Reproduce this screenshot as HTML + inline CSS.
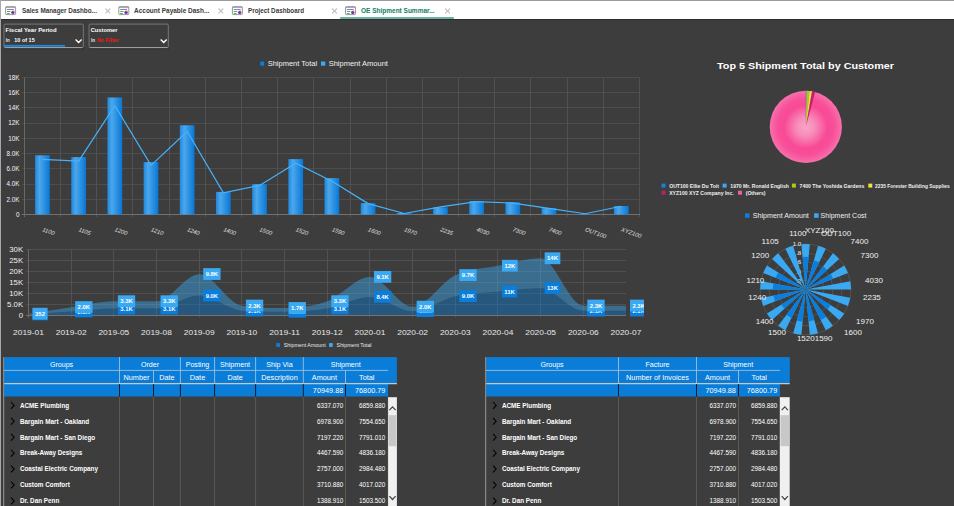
<!DOCTYPE html><html><head><meta charset="utf-8"><style>
*{margin:0;padding:0;box-sizing:border-box}
html,body{width:954px;height:506px;overflow:hidden;background:#3d3d3d;font-family:"Liberation Sans", sans-serif;}
.a{position:absolute}
svg{position:absolute;left:0;top:0;overflow:visible}

</style></head><body>
<div class="a" style="left:0;top:0;width:954px;height:1px;background:#9a9a9a"></div>
<div class="a" style="left:0;top:1px;width:954px;height:18px;background:#fff"></div>
<div class="a" style="left:0;top:19px;width:954px;height:1px;background:#2e2e2e"></div>
<div class="a" style="left:0;top:0;width:1px;height:506px;background:#a8a8a8"></div>
<svg width="954" height="506" viewBox="0 0 954 506" font-family='Liberation Sans, sans-serif'>
<g transform="translate(0.0,0)">
<rect x="5.6" y="6.8" width="10" height="7.8" rx="0.8" fill="#fdfdfd" stroke="#8a8a8a" stroke-width="0.9"/>
<rect x="5.6" y="6.6" width="10" height="1" fill="#8a8a8a"/>
<rect x="6.9" y="9.1" width="6.9" height="0.8" fill="#6a5ad6"/>
<rect x="6.9" y="11" width="3.5" height="0.9" fill="#3cb043"/>
<rect x="6.9" y="13" width="2.8" height="0.9" fill="#3cb043"/>
<circle cx="12.9" cy="12.4" r="1.7" fill="#6a2fc8"/>
<circle cx="13.6" cy="11.2" r="0.8" fill="#f07828"/>
</g>
<text x="22.0" y="12.8" font-size="6.4" fill="#3a3a3a" font-weight="bold" textLength="74.9" lengthAdjust="spacingAndGlyphs">Sales Manager Dashbo...</text>
<path d="M105.40,8.50 L110.20,13.30 M110.20,8.50 L105.40,13.30" stroke="#c2c2c2" stroke-width="1.1"/>
<g transform="translate(113.2,0)">
<rect x="5.6" y="6.8" width="10" height="7.8" rx="0.8" fill="#fdfdfd" stroke="#8a8a8a" stroke-width="0.9"/>
<rect x="5.6" y="6.6" width="10" height="1" fill="#8a8a8a"/>
<rect x="6.9" y="9.1" width="6.9" height="0.8" fill="#6a5ad6"/>
<rect x="6.9" y="11" width="3.5" height="0.9" fill="#3cb043"/>
<rect x="6.9" y="13" width="2.8" height="0.9" fill="#3cb043"/>
<circle cx="12.9" cy="12.4" r="1.7" fill="#6a2fc8"/>
<circle cx="13.6" cy="11.2" r="0.8" fill="#f07828"/>
</g>
<text x="134.0" y="12.8" font-size="6.4" fill="#3a3a3a" font-weight="bold" textLength="75.3" lengthAdjust="spacingAndGlyphs">Account Payable Dash...</text>
<path d="M218.50,8.50 L223.30,13.30 M223.30,8.50 L218.50,13.30" stroke="#c2c2c2" stroke-width="1.1"/>
<g transform="translate(226.8,0)">
<rect x="5.6" y="6.8" width="10" height="7.8" rx="0.8" fill="#fdfdfd" stroke="#8a8a8a" stroke-width="0.9"/>
<rect x="5.6" y="6.6" width="10" height="1" fill="#8a8a8a"/>
<rect x="6.9" y="9.1" width="6.9" height="0.8" fill="#6a5ad6"/>
<rect x="6.9" y="11" width="3.5" height="0.9" fill="#3cb043"/>
<rect x="6.9" y="13" width="2.8" height="0.9" fill="#3cb043"/>
<circle cx="12.9" cy="12.4" r="1.7" fill="#6a2fc8"/>
<circle cx="13.6" cy="11.2" r="0.8" fill="#f07828"/>
</g>
<text x="248.0" y="12.8" font-size="6.4" fill="#3a3a3a" font-weight="bold" textLength="56.0" lengthAdjust="spacingAndGlyphs">Project Dashboard</text>
<path d="M332.10,8.50 L336.90,13.30 M336.90,8.50 L332.10,13.30" stroke="#c2c2c2" stroke-width="1.1"/>
<g transform="translate(339.9,0)">
<rect x="5.6" y="6.8" width="10" height="7.8" rx="0.8" fill="#fdfdfd" stroke="#8a8a8a" stroke-width="0.9"/>
<rect x="5.6" y="6.6" width="10" height="1" fill="#8a8a8a"/>
<rect x="6.9" y="9.1" width="6.9" height="0.8" fill="#6a5ad6"/>
<rect x="6.9" y="11" width="3.5" height="0.9" fill="#3cb043"/>
<rect x="6.9" y="13" width="2.8" height="0.9" fill="#3cb043"/>
<circle cx="12.9" cy="12.4" r="1.7" fill="#6a2fc8"/>
<circle cx="13.6" cy="11.2" r="0.8" fill="#f07828"/>
</g>
<text x="361.0" y="12.8" font-size="6.4" fill="#0b7d62" font-weight="bold" textLength="73.6" lengthAdjust="spacingAndGlyphs">OE Shipment Summar...</text>
<path d="M445.20,8.50 L450.00,13.30 M450.00,8.50 L445.20,13.30" stroke="#c2c2c2" stroke-width="1.1"/>
<rect x="340.2" y="17.4" width="113.6" height="1.2" fill="#0b7d62"/>
<rect x="4.5" y="48" width="79.3" height="1.2" fill="#2e2e2e"/>
<rect x="4.0" y="24.1" width="79.3" height="23.5" rx="1" fill="none" stroke="#858585" stroke-width="0.8"/>
<line x1="5.0" y1="47.6" x2="82.3" y2="47.6" stroke="#b0b0b0" stroke-width="0.8"/>
<text x="5.6" y="31.9" font-size="5.9" font-weight="bold" fill="#fff" textLength="51.0" lengthAdjust="spacingAndGlyphs">Fiscal Year Period</text>
<text x="5.8" y="42.3" font-size="4.5" font-weight="bold" fill="#e8e8e8">In</text>
<text x="14.3" y="41.9" font-size="5.5" font-weight="bold" fill="#fff" textLength="20.4" lengthAdjust="spacingAndGlyphs">10 of 15</text>
<path d="M75.6 39.6 L78.6 42.6 L81.6 39.6" fill="none" stroke="#fff" stroke-width="1.4"/>
<rect x="89.6" y="48" width="79.2" height="1.2" fill="#2e2e2e"/>
<rect x="89.1" y="24.1" width="79.2" height="23.5" rx="1" fill="none" stroke="#858585" stroke-width="0.8"/>
<line x1="90.1" y1="47.6" x2="167.3" y2="47.6" stroke="#b0b0b0" stroke-width="0.8"/>
<text x="90.7" y="31.9" font-size="5.9" font-weight="bold" fill="#fff" textLength="26.7" lengthAdjust="spacingAndGlyphs">Customer</text>
<text x="90.9" y="42.3" font-size="4.5" font-weight="bold" fill="#e8e8e8">In</text>
<text x="96.9" y="41.9" font-size="5.5" font-weight="bold" fill="#f01818" textLength="21.8" lengthAdjust="spacingAndGlyphs">No Filter</text>
<path d="M160.7 39.6 L163.7 42.6 L166.7 39.6" fill="none" stroke="#fff" stroke-width="1.4"/>
<rect x="4.0" y="44.9" width="61" height="1.8" fill="#1a8ae6"/>
<defs><linearGradient id="bg1" x1="0" x2="1" y1="0" y2="0"><stop offset="0" stop-color="#1f88dc"/><stop offset="0.3" stop-color="#4ba7ec"/><stop offset="0.65" stop-color="#2a8fe0"/><stop offset="1" stop-color="#0877d6"/></linearGradient>
<radialGradient id="pie" cx="0.5" cy="0.5" r="0.5"><stop offset="0" stop-color="#f9a6c8"/><stop offset="0.25" stop-color="#f88cba"/><stop offset="0.6" stop-color="#f84a96"/><stop offset="0.78" stop-color="#f84f99"/><stop offset="1" stop-color="#f870ac"/></radialGradient></defs>
<line x1="21.9" y1="214.50" x2="639.5" y2="214.50" stroke="#4d4d4d" stroke-width="1"/>
<text x="19.4" y="216.80" font-size="6.3" fill="#f4f4f4" text-anchor="end">0</text>
<line x1="21.9" y1="199.50" x2="639.5" y2="199.50" stroke="#4d4d4d" stroke-width="1"/>
<text x="19.4" y="201.58" font-size="6.3" fill="#f4f4f4" text-anchor="end">2.0K</text>
<line x1="21.9" y1="184.50" x2="639.5" y2="184.50" stroke="#4d4d4d" stroke-width="1"/>
<text x="19.4" y="186.36" font-size="6.3" fill="#f4f4f4" text-anchor="end">4.0K</text>
<line x1="21.9" y1="168.50" x2="639.5" y2="168.50" stroke="#4d4d4d" stroke-width="1"/>
<text x="19.4" y="171.14" font-size="6.3" fill="#f4f4f4" text-anchor="end">6.0K</text>
<line x1="21.9" y1="153.50" x2="639.5" y2="153.50" stroke="#4d4d4d" stroke-width="1"/>
<text x="19.4" y="155.92" font-size="6.3" fill="#f4f4f4" text-anchor="end">8.0K</text>
<line x1="21.9" y1="138.50" x2="639.5" y2="138.50" stroke="#4d4d4d" stroke-width="1"/>
<text x="19.4" y="140.70" font-size="6.3" fill="#f4f4f4" text-anchor="end">10K</text>
<line x1="21.9" y1="123.50" x2="639.5" y2="123.50" stroke="#4d4d4d" stroke-width="1"/>
<text x="19.4" y="125.48" font-size="6.3" fill="#f4f4f4" text-anchor="end">12K</text>
<line x1="21.9" y1="107.50" x2="639.5" y2="107.50" stroke="#4d4d4d" stroke-width="1"/>
<text x="19.4" y="110.26" font-size="6.3" fill="#f4f4f4" text-anchor="end">14K</text>
<line x1="21.9" y1="92.50" x2="639.5" y2="92.50" stroke="#4d4d4d" stroke-width="1"/>
<text x="19.4" y="95.04" font-size="6.3" fill="#f4f4f4" text-anchor="end">16K</text>
<line x1="21.9" y1="77.50" x2="639.5" y2="77.50" stroke="#4d4d4d" stroke-width="1"/>
<text x="19.4" y="79.82" font-size="6.3" fill="#f4f4f4" text-anchor="end">18K</text>
<line x1="24.50" y1="77.5" x2="24.50" y2="217.0" stroke="#515151" stroke-width="1"/>
<line x1="60.50" y1="77.5" x2="60.50" y2="217.0" stroke="#515151" stroke-width="1"/>
<line x1="96.50" y1="77.5" x2="96.50" y2="217.0" stroke="#515151" stroke-width="1"/>
<line x1="132.50" y1="77.5" x2="132.50" y2="217.0" stroke="#515151" stroke-width="1"/>
<line x1="169.50" y1="77.5" x2="169.50" y2="217.0" stroke="#515151" stroke-width="1"/>
<line x1="205.50" y1="77.5" x2="205.50" y2="217.0" stroke="#515151" stroke-width="1"/>
<line x1="241.50" y1="77.5" x2="241.50" y2="217.0" stroke="#515151" stroke-width="1"/>
<line x1="277.50" y1="77.5" x2="277.50" y2="217.0" stroke="#515151" stroke-width="1"/>
<line x1="313.50" y1="77.5" x2="313.50" y2="217.0" stroke="#515151" stroke-width="1"/>
<line x1="350.50" y1="77.5" x2="350.50" y2="217.0" stroke="#515151" stroke-width="1"/>
<line x1="386.50" y1="77.5" x2="386.50" y2="217.0" stroke="#515151" stroke-width="1"/>
<line x1="422.50" y1="77.5" x2="422.50" y2="217.0" stroke="#515151" stroke-width="1"/>
<line x1="458.50" y1="77.5" x2="458.50" y2="217.0" stroke="#515151" stroke-width="1"/>
<line x1="494.50" y1="77.5" x2="494.50" y2="217.0" stroke="#515151" stroke-width="1"/>
<line x1="530.50" y1="77.5" x2="530.50" y2="217.0" stroke="#515151" stroke-width="1"/>
<line x1="567.50" y1="77.5" x2="567.50" y2="217.0" stroke="#515151" stroke-width="1"/>
<line x1="603.50" y1="77.5" x2="603.50" y2="217.0" stroke="#515151" stroke-width="1"/>
<line x1="639.50" y1="77.5" x2="639.50" y2="217.0" stroke="#515151" stroke-width="1"/>
<line x1="21.9" y1="214.50" x2="640.0" y2="214.50" stroke="#727272" stroke-width="1"/>
<line x1="24.50" y1="77.5" x2="24.50" y2="217.0" stroke="#686868" stroke-width="1"/>
<rect x="35.09" y="155.29" width="14.7" height="59.21" fill="url(#bg1)"/>
<rect x="71.27" y="157.12" width="14.7" height="57.38" fill="url(#bg1)"/>
<rect x="107.45" y="97.46" width="14.7" height="117.04" fill="url(#bg1)"/>
<rect x="143.63" y="162.07" width="14.7" height="52.43" fill="url(#bg1)"/>
<rect x="179.81" y="125.23" width="14.7" height="89.27" fill="url(#bg1)"/>
<rect x="215.99" y="191.90" width="14.7" height="22.60" fill="url(#bg1)"/>
<rect x="252.17" y="184.14" width="14.7" height="30.36" fill="url(#bg1)"/>
<rect x="288.35" y="159.10" width="14.7" height="55.40" fill="url(#bg1)"/>
<rect x="324.53" y="178.12" width="14.7" height="36.38" fill="url(#bg1)"/>
<rect x="360.71" y="203.16" width="14.7" height="11.34" fill="url(#bg1)"/>
<rect x="396.89" y="212.98" width="14.7" height="1.52" fill="url(#bg1)"/>
<rect x="433.07" y="207.35" width="14.7" height="7.15" fill="url(#bg1)"/>
<rect x="469.25" y="201.03" width="14.7" height="13.47" fill="url(#bg1)"/>
<rect x="505.43" y="202.17" width="14.7" height="12.33" fill="url(#bg1)"/>
<rect x="541.61" y="208.11" width="14.7" height="6.39" fill="url(#bg1)"/>
<rect x="577.79" y="214.12" width="14.7" height="0.38" fill="url(#bg1)"/>
<rect x="613.97" y="206.05" width="14.7" height="8.45" fill="url(#bg1)"/>
<polyline points="42.49,159.33 78.67,161.08 114.85,105.68 151.03,165.42 187.21,131.55 223.39,192.89 259.57,185.43 295.75,163.28 331.93,181.17 368.11,203.62 404.29,213.51 440.47,206.89 476.65,201.64 512.83,203.09 549.01,208.41 585.19,213.74 621.37,206.28" fill="none" stroke="#45b2fa" stroke-width="1.2"/>
<text transform="translate(41.99,231) rotate(20)" font-size="5.8" font-style="italic" fill="#e0e0e0">1100</text>
<text transform="translate(78.17,231) rotate(20)" font-size="5.8" font-style="italic" fill="#e0e0e0">1105</text>
<text transform="translate(114.35,231) rotate(20)" font-size="5.8" font-style="italic" fill="#e0e0e0">1200</text>
<text transform="translate(150.53,231) rotate(20)" font-size="5.8" font-style="italic" fill="#e0e0e0">1210</text>
<text transform="translate(186.71,231) rotate(20)" font-size="5.8" font-style="italic" fill="#e0e0e0">1240</text>
<text transform="translate(222.89,231) rotate(20)" font-size="5.8" font-style="italic" fill="#e0e0e0">1400</text>
<text transform="translate(259.07,231) rotate(20)" font-size="5.8" font-style="italic" fill="#e0e0e0">1500</text>
<text transform="translate(295.25,231) rotate(20)" font-size="5.8" font-style="italic" fill="#e0e0e0">1520</text>
<text transform="translate(331.43,231) rotate(20)" font-size="5.8" font-style="italic" fill="#e0e0e0">1590</text>
<text transform="translate(367.61,231) rotate(20)" font-size="5.8" font-style="italic" fill="#e0e0e0">1600</text>
<text transform="translate(403.79,231) rotate(20)" font-size="5.8" font-style="italic" fill="#e0e0e0">1970</text>
<text transform="translate(439.97,231) rotate(20)" font-size="5.8" font-style="italic" fill="#e0e0e0">2235</text>
<text transform="translate(476.15,231) rotate(20)" font-size="5.8" font-style="italic" fill="#e0e0e0">4030</text>
<text transform="translate(512.33,231) rotate(20)" font-size="5.8" font-style="italic" fill="#e0e0e0">7300</text>
<text transform="translate(548.51,231) rotate(20)" font-size="5.8" font-style="italic" fill="#e0e0e0">7400</text>
<text transform="translate(584.69,231) rotate(20)" font-size="5.8" font-style="italic" fill="#e0e0e0">OUT100</text>
<text transform="translate(620.87,231) rotate(20)" font-size="5.8" font-style="italic" fill="#e0e0e0">XYZ100</text>
<rect x="260.2" y="61.5" width="4" height="4.2" fill="#0b7dda"/>
<text x="267.7" y="66.3" font-size="7.5" fill="#f0f0f0">Shipment Total</text>
<rect x="321" y="61.5" width="4.3" height="4.2" fill="#3aa9f2"/>
<text x="328.7" y="66.3" font-size="7.5" fill="#f0f0f0">Shipment Amount</text>
<line x1="26.0" y1="315.50" x2="626.0" y2="315.50" stroke="#505050" stroke-width="1"/>
<text x="23.1" y="318.05" font-size="7.8" fill="#f0f0f0" text-anchor="end">0</text>
<line x1="26.0" y1="304.50" x2="626.0" y2="304.50" stroke="#505050" stroke-width="1"/>
<text x="23.1" y="307.10" font-size="7.8" fill="#f0f0f0" text-anchor="end">5.0K</text>
<line x1="26.0" y1="293.50" x2="626.0" y2="293.50" stroke="#505050" stroke-width="1"/>
<text x="23.1" y="296.15" font-size="7.8" fill="#f0f0f0" text-anchor="end">10K</text>
<line x1="26.0" y1="282.50" x2="626.0" y2="282.50" stroke="#505050" stroke-width="1"/>
<text x="23.1" y="285.20" font-size="7.8" fill="#f0f0f0" text-anchor="end">15K</text>
<line x1="26.0" y1="271.50" x2="626.0" y2="271.50" stroke="#505050" stroke-width="1"/>
<text x="23.1" y="274.25" font-size="7.8" fill="#f0f0f0" text-anchor="end">20K</text>
<line x1="26.0" y1="260.50" x2="626.0" y2="260.50" stroke="#505050" stroke-width="1"/>
<text x="23.1" y="263.30" font-size="7.8" fill="#f0f0f0" text-anchor="end">25K</text>
<line x1="26.0" y1="249.50" x2="626.0" y2="249.50" stroke="#505050" stroke-width="1"/>
<text x="23.1" y="252.35" font-size="7.8" fill="#f0f0f0" text-anchor="end">30K</text>
<line x1="28.50" y1="249.5" x2="28.50" y2="317.8" stroke="#515151" stroke-width="1"/>
<line x1="71.50" y1="249.5" x2="71.50" y2="317.8" stroke="#515151" stroke-width="1"/>
<line x1="113.50" y1="249.5" x2="113.50" y2="317.8" stroke="#515151" stroke-width="1"/>
<line x1="156.50" y1="249.5" x2="156.50" y2="317.8" stroke="#515151" stroke-width="1"/>
<line x1="199.50" y1="249.5" x2="199.50" y2="317.8" stroke="#515151" stroke-width="1"/>
<line x1="241.50" y1="249.5" x2="241.50" y2="317.8" stroke="#515151" stroke-width="1"/>
<line x1="284.50" y1="249.5" x2="284.50" y2="317.8" stroke="#515151" stroke-width="1"/>
<line x1="327.50" y1="249.5" x2="327.50" y2="317.8" stroke="#515151" stroke-width="1"/>
<line x1="369.50" y1="249.5" x2="369.50" y2="317.8" stroke="#515151" stroke-width="1"/>
<line x1="412.50" y1="249.5" x2="412.50" y2="317.8" stroke="#515151" stroke-width="1"/>
<line x1="455.50" y1="249.5" x2="455.50" y2="317.8" stroke="#515151" stroke-width="1"/>
<line x1="497.50" y1="249.5" x2="497.50" y2="317.8" stroke="#515151" stroke-width="1"/>
<line x1="540.50" y1="249.5" x2="540.50" y2="317.8" stroke="#515151" stroke-width="1"/>
<line x1="583.50" y1="249.5" x2="583.50" y2="317.8" stroke="#515151" stroke-width="1"/>
<path d="M28.50,314.53 C42.73,313.55 56.95,312.58 71.18,311.58 C85.41,310.57 99.63,308.51 113.86,308.51 C128.09,308.51 142.31,308.51 156.54,308.51 C170.77,308.51 184.99,295.59 199.22,295.59 C213.45,295.59 227.67,309.61 241.90,310.70 C256.13,311.80 270.35,311.80 284.58,311.80 C298.81,311.80 313.03,310.99 327.26,308.51 C341.49,306.03 355.71,296.90 369.94,296.90 C384.17,296.90 398.39,311.14 412.62,311.14 C426.85,311.14 441.07,299.50 455.30,296.25 C469.53,293.00 483.75,293.00 497.98,291.65 C512.21,290.30 526.43,288.14 540.66,288.14 C554.89,288.14 569.11,310.70 583.34,310.70 C597.57,310.70 611.79,310.70 626.02,310.70 L626.02,315.30 L28.50,315.30 Z" fill="#0b7dda" fill-opacity="0.42"/>
<path d="M28.50,313.77 C42.73,311.58 56.95,309.28 71.18,307.20 C85.41,305.12 99.63,301.28 113.86,301.28 C128.09,301.28 142.31,301.28 156.54,301.28 C170.77,301.28 184.99,274.13 199.22,274.13 C213.45,274.13 227.67,303.25 241.90,305.66 C256.13,308.07 270.35,308.07 284.58,308.07 C298.81,308.07 313.03,306.47 327.26,301.28 C341.49,296.10 355.71,276.98 369.94,276.98 C384.17,276.98 398.39,306.76 412.62,306.76 C426.85,306.76 441.07,282.05 455.30,275.22 C469.53,268.40 483.75,268.62 497.98,265.81 C512.21,263.00 526.43,258.36 540.66,258.36 C554.89,258.36 569.11,305.66 583.34,305.66 C597.57,305.66 611.79,305.66 626.02,305.66 L626.02,310.70 C611.79,310.70 597.57,310.70 583.34,310.70 C569.11,310.70 554.89,288.14 540.66,288.14 C526.43,288.14 512.21,290.30 497.98,291.65 C483.75,293.00 469.53,293.00 455.30,296.25 C441.07,299.50 426.85,311.14 412.62,311.14 C398.39,311.14 384.17,296.90 369.94,296.90 C355.71,296.90 341.49,306.03 327.26,308.51 C313.03,310.99 298.81,311.80 284.58,311.80 C270.35,311.80 256.13,311.80 241.90,310.70 C227.67,309.61 213.45,295.59 199.22,295.59 C184.99,295.59 170.77,308.51 156.54,308.51 C142.31,308.51 128.09,308.51 113.86,308.51 C99.63,308.51 85.41,310.57 71.18,311.58 C56.95,312.58 42.73,313.55 28.50,314.53 Z" fill="#3aa9f2" fill-opacity="0.45"/>
<line x1="26.0" y1="315.50" x2="626.0" y2="315.50" stroke="#727272" stroke-width="1"/>
<line x1="28.50" y1="249.5" x2="28.50" y2="317.8" stroke="#686868" stroke-width="1"/>
<clipPath id="c2"><rect x="0" y="240" width="644" height="110"/></clipPath><g clip-path="url(#c2)">
<rect x="32.50" y="308.53" width="15.01" height="11.8" fill="#0b7dda"/>
<text x="40.01" y="316.63" font-size="5.9" font-weight="bold" fill="#fff" text-anchor="middle">352</text>
<rect x="75.18" y="305.58" width="17.34" height="11.8" fill="#0b7dda"/>
<text x="83.85" y="313.68" font-size="5.9" font-weight="bold" fill="#fff" text-anchor="middle">2.0K</text>
<rect x="117.86" y="302.51" width="17.34" height="11.8" fill="#0b7dda"/>
<text x="126.53" y="310.61" font-size="5.9" font-weight="bold" fill="#fff" text-anchor="middle">3.1K</text>
<rect x="160.54" y="302.51" width="17.34" height="11.8" fill="#0b7dda"/>
<text x="169.21" y="310.61" font-size="5.9" font-weight="bold" fill="#fff" text-anchor="middle">3.1K</text>
<rect x="203.22" y="289.59" width="17.34" height="11.8" fill="#0b7dda"/>
<text x="211.89" y="297.69" font-size="5.9" font-weight="bold" fill="#fff" text-anchor="middle">9.0K</text>
<rect x="245.90" y="304.70" width="17.34" height="11.8" fill="#0b7dda"/>
<text x="254.57" y="312.80" font-size="5.9" font-weight="bold" fill="#fff" text-anchor="middle">2.1K</text>
<rect x="288.58" y="305.80" width="17.34" height="11.8" fill="#0b7dda"/>
<text x="297.25" y="313.90" font-size="5.9" font-weight="bold" fill="#fff" text-anchor="middle">1.6K</text>
<rect x="331.26" y="302.51" width="17.34" height="11.8" fill="#0b7dda"/>
<text x="339.93" y="310.61" font-size="5.9" font-weight="bold" fill="#fff" text-anchor="middle">3.1K</text>
<rect x="373.94" y="290.90" width="17.34" height="11.8" fill="#0b7dda"/>
<text x="382.61" y="299.00" font-size="5.9" font-weight="bold" fill="#fff" text-anchor="middle">8.4K</text>
<rect x="416.62" y="305.14" width="17.34" height="11.8" fill="#0b7dda"/>
<text x="425.29" y="313.24" font-size="5.9" font-weight="bold" fill="#fff" text-anchor="middle">1.9K</text>
<rect x="459.30" y="290.25" width="17.34" height="11.8" fill="#0b7dda"/>
<text x="467.97" y="298.35" font-size="5.9" font-weight="bold" fill="#fff" text-anchor="middle">9.0K</text>
<rect x="501.98" y="285.65" width="15.23" height="11.8" fill="#0b7dda"/>
<text x="509.60" y="293.75" font-size="5.9" font-weight="bold" fill="#fff" text-anchor="middle">11K</text>
<rect x="544.66" y="282.14" width="15.68" height="11.8" fill="#0b7dda"/>
<text x="552.50" y="290.24" font-size="5.9" font-weight="bold" fill="#fff" text-anchor="middle">13K</text>
<rect x="587.34" y="304.70" width="17.34" height="11.8" fill="#0b7dda"/>
<text x="596.01" y="312.80" font-size="5.9" font-weight="bold" fill="#fff" text-anchor="middle">2.1K</text>
<rect x="630.02" y="304.70" width="17.34" height="11.8" fill="#0b7dda"/>
<text x="638.69" y="312.80" font-size="5.9" font-weight="bold" fill="#fff" text-anchor="middle">2.1K</text>
<rect x="32.50" y="307.77" width="15.01" height="11.8" fill="#3aa9f2"/>
<text x="40.01" y="315.87" font-size="5.9" font-weight="bold" fill="#fff" text-anchor="middle">352</text>
<rect x="75.18" y="301.20" width="17.34" height="11.8" fill="#3aa9f2"/>
<text x="83.85" y="309.30" font-size="5.9" font-weight="bold" fill="#fff" text-anchor="middle">2.0K</text>
<rect x="117.86" y="295.28" width="17.34" height="11.8" fill="#3aa9f2"/>
<text x="126.53" y="303.38" font-size="5.9" font-weight="bold" fill="#fff" text-anchor="middle">3.3K</text>
<rect x="160.54" y="295.28" width="17.34" height="11.8" fill="#3aa9f2"/>
<text x="169.21" y="303.38" font-size="5.9" font-weight="bold" fill="#fff" text-anchor="middle">3.3K</text>
<rect x="203.22" y="268.13" width="17.34" height="11.8" fill="#3aa9f2"/>
<text x="211.89" y="276.23" font-size="5.9" font-weight="bold" fill="#fff" text-anchor="middle">9.8K</text>
<rect x="245.90" y="299.66" width="17.34" height="11.8" fill="#3aa9f2"/>
<text x="254.57" y="307.76" font-size="5.9" font-weight="bold" fill="#fff" text-anchor="middle">2.3K</text>
<rect x="288.58" y="302.07" width="17.34" height="11.8" fill="#3aa9f2"/>
<text x="297.25" y="310.17" font-size="5.9" font-weight="bold" fill="#fff" text-anchor="middle">1.7K</text>
<rect x="331.26" y="295.28" width="17.34" height="11.8" fill="#3aa9f2"/>
<text x="339.93" y="303.38" font-size="5.9" font-weight="bold" fill="#fff" text-anchor="middle">3.3K</text>
<rect x="373.94" y="270.98" width="17.34" height="11.8" fill="#3aa9f2"/>
<text x="382.61" y="279.08" font-size="5.9" font-weight="bold" fill="#fff" text-anchor="middle">9.1K</text>
<rect x="416.62" y="300.76" width="17.34" height="11.8" fill="#3aa9f2"/>
<text x="425.29" y="308.86" font-size="5.9" font-weight="bold" fill="#fff" text-anchor="middle">2.0K</text>
<rect x="459.30" y="269.22" width="17.34" height="11.8" fill="#3aa9f2"/>
<text x="467.97" y="277.32" font-size="5.9" font-weight="bold" fill="#fff" text-anchor="middle">9.7K</text>
<rect x="501.98" y="259.81" width="15.68" height="11.8" fill="#3aa9f2"/>
<text x="509.82" y="267.91" font-size="5.9" font-weight="bold" fill="#fff" text-anchor="middle">12K</text>
<rect x="544.66" y="252.36" width="15.68" height="11.8" fill="#3aa9f2"/>
<text x="552.50" y="260.46" font-size="5.9" font-weight="bold" fill="#fff" text-anchor="middle">14K</text>
<rect x="587.34" y="299.66" width="17.34" height="11.8" fill="#3aa9f2"/>
<text x="596.01" y="307.76" font-size="5.9" font-weight="bold" fill="#fff" text-anchor="middle">2.3K</text>
<rect x="630.02" y="299.66" width="17.34" height="11.8" fill="#3aa9f2"/>
<text x="638.69" y="307.76" font-size="5.9" font-weight="bold" fill="#fff" text-anchor="middle">2.3K</text>
</g>
<text x="28.50" y="335.2" font-size="7.9" fill="#e8e8e8" text-anchor="middle" textLength="30.8" lengthAdjust="spacingAndGlyphs">2019-01</text>
<text x="71.18" y="335.2" font-size="7.9" fill="#e8e8e8" text-anchor="middle" textLength="30.8" lengthAdjust="spacingAndGlyphs">2019-02</text>
<text x="113.86" y="335.2" font-size="7.9" fill="#e8e8e8" text-anchor="middle" textLength="30.8" lengthAdjust="spacingAndGlyphs">2019-05</text>
<text x="156.54" y="335.2" font-size="7.9" fill="#e8e8e8" text-anchor="middle" textLength="30.8" lengthAdjust="spacingAndGlyphs">2019-08</text>
<text x="199.22" y="335.2" font-size="7.9" fill="#e8e8e8" text-anchor="middle" textLength="30.8" lengthAdjust="spacingAndGlyphs">2019-09</text>
<text x="241.90" y="335.2" font-size="7.9" fill="#e8e8e8" text-anchor="middle" textLength="30.8" lengthAdjust="spacingAndGlyphs">2019-10</text>
<text x="284.58" y="335.2" font-size="7.9" fill="#e8e8e8" text-anchor="middle" textLength="30.8" lengthAdjust="spacingAndGlyphs">2019-11</text>
<text x="327.26" y="335.2" font-size="7.9" fill="#e8e8e8" text-anchor="middle" textLength="30.8" lengthAdjust="spacingAndGlyphs">2019-12</text>
<text x="369.94" y="335.2" font-size="7.9" fill="#e8e8e8" text-anchor="middle" textLength="30.8" lengthAdjust="spacingAndGlyphs">2020-01</text>
<text x="412.62" y="335.2" font-size="7.9" fill="#e8e8e8" text-anchor="middle" textLength="30.8" lengthAdjust="spacingAndGlyphs">2020-02</text>
<text x="455.30" y="335.2" font-size="7.9" fill="#e8e8e8" text-anchor="middle" textLength="30.8" lengthAdjust="spacingAndGlyphs">2020-03</text>
<text x="497.98" y="335.2" font-size="7.9" fill="#e8e8e8" text-anchor="middle" textLength="30.8" lengthAdjust="spacingAndGlyphs">2020-04</text>
<text x="540.66" y="335.2" font-size="7.9" fill="#e8e8e8" text-anchor="middle" textLength="30.8" lengthAdjust="spacingAndGlyphs">2020-05</text>
<text x="583.34" y="335.2" font-size="7.9" fill="#e8e8e8" text-anchor="middle" textLength="30.8" lengthAdjust="spacingAndGlyphs">2020-06</text>
<text x="626.02" y="335.2" font-size="7.9" fill="#e8e8e8" text-anchor="middle" textLength="30.8" lengthAdjust="spacingAndGlyphs">2020-07</text>
<rect x="276.2" y="343.1" width="3.8" height="3.8" fill="#0b7dda"/>
<text x="283.8" y="347" font-size="5.3" fill="#e8e8e8">Shipment Amount</text>
<rect x="329" y="343.1" width="3.8" height="3.8" fill="#3aa9f2"/>
<text x="336.6" y="347" font-size="5.3" fill="#e8e8e8">Shipment Total</text>
<text x="717" y="68.6" font-size="9.3" font-weight="bold" fill="#fff" textLength="177" lengthAdjust="spacingAndGlyphs">Top 5 Shipment Total by Customer</text>
<circle cx="805.8" cy="126.9" r="36.1" fill="url(#pie)"/>
<path d="M805.80,126.90 L805.80,90.80 A36.10,36.10 0 0 1 806.43,90.81 Z" fill="#1a7fd6"/>
<path d="M805.80,126.90 L806.43,90.81 A36.10,36.10 0 0 1 806.81,90.81 Z" fill="#3aa9f2"/>
<path d="M805.80,126.90 L806.81,90.81 A36.10,36.10 0 0 1 809.70,91.01 Z" fill="#a8cc1c"/>
<path d="M805.80,126.90 L809.70,91.01 A36.10,36.10 0 0 1 812.07,91.35 Z" fill="#f0e040"/>
<path d="M805.80,126.90 L812.07,91.35 A36.10,36.10 0 0 1 815.08,92.01 Z" fill="#c0206a"/>
<rect x="661.5" y="183.6" width="4" height="4" fill="#1a7fd6"/>
<text x="669.2" y="187.5" font-size="5.1" font-weight="bold" fill="#f0f0f0">OUT100 Ellie Du Toit</text>
<rect x="722.6" y="183.6" width="4" height="4" fill="#3aa9f2"/>
<text x="730.3" y="187.5" font-size="5.1" font-weight="bold" fill="#f0f0f0">1970 Mr. Ronald English</text>
<rect x="791.9" y="183.6" width="4" height="4" fill="#a8cc1c"/>
<text x="799.6" y="187.5" font-size="5.1" font-weight="bold" fill="#f0f0f0">7400 The Yoshida Gardens</text>
<rect x="868.3" y="183.6" width="4" height="4" fill="#f0e040"/>
<text x="875.1" y="187.5" font-size="5.1" font-weight="bold" fill="#f0f0f0" textLength="74.6" lengthAdjust="spacingAndGlyphs">2235 Forester Building Supplies</text>
<rect x="661.5" y="190.7" width="4" height="4" fill="#c0206a"/>
<text x="669.2" y="194.6" font-size="5.1" font-weight="bold" fill="#f0f0f0">XYZ100 XYZ Company Inc.</text>
<rect x="738.0" y="190.7" width="4" height="4" fill="#f25c9f"/>
<text x="745.7" y="194.6" font-size="5.1" font-weight="bold" fill="#f0f0f0">(Others)</text>
<rect x="745" y="213.3" width="4.5" height="4.5" fill="#0b7dda"/>
<text x="752.8" y="218.2" font-size="7.1" fill="#eeeeee">Shipment Amount</text>
<rect x="814.1" y="213.3" width="4.5" height="4.5" fill="#3aa9f2"/>
<text x="820.6" y="218.2" font-size="7.0" fill="#eeeeee">Shipment Cost</text>
<circle cx="805.6" cy="289.5" r="9.08" fill="none" stroke="#5a5a5a" stroke-width="0.7"/>
<circle cx="805.6" cy="289.5" r="18.16" fill="none" stroke="#5a5a5a" stroke-width="0.7"/>
<circle cx="805.6" cy="289.5" r="27.24" fill="none" stroke="#5a5a5a" stroke-width="0.7"/>
<circle cx="805.6" cy="289.5" r="36.32" fill="none" stroke="#5a5a5a" stroke-width="0.7"/>
<circle cx="805.6" cy="289.5" r="45.40" fill="none" stroke="#5a5a5a" stroke-width="0.7"/>
<text x="801.3" y="246.30" font-size="6.2" fill="#f0f0f0" text-anchor="end">1.0</text>
<text x="801.3" y="255.38" font-size="6.2" fill="#f0f0f0" text-anchor="end">.8</text>
<text x="801.3" y="264.46" font-size="6.2" fill="#f0f0f0" text-anchor="end">.6</text>
<text x="801.3" y="273.54" font-size="6.2" fill="#f0f0f0" text-anchor="end">.4</text>
<text x="801.3" y="282.62" font-size="6.2" fill="#f0f0f0" text-anchor="end">.2</text>
<path d="M805.60,289.50 L801.41,244.29 A45.40,45.40 0 0 1 809.79,244.29 Z" fill="#3aa9f2"/>
<path d="M805.60,289.50 L802.58,256.95 A32.69,32.69 0 0 1 808.62,256.95 Z" fill="#0b7dda"/>
<path d="M805.60,289.50 L818.02,245.83 A45.40,45.40 0 0 1 825.84,248.86 Z" fill="#3aa9f2"/>
<path d="M805.60,289.50 L813.92,260.24 A30.42,30.42 0 0 1 819.16,262.27 Z" fill="#0b7dda"/>
<path d="M805.60,289.50 L832.96,253.27 A45.40,45.40 0 0 1 839.15,258.92 Z" fill="#3aa9f2"/>
<path d="M805.60,289.50 L823.11,266.31 A29.06,29.06 0 0 1 827.07,269.93 Z" fill="#0b7dda"/>
<path d="M805.60,289.50 L844.20,265.60 A45.40,45.40 0 0 1 847.94,273.10 Z" fill="#3aa9f2"/>
<path d="M805.60,289.50 L830.69,273.96 A29.51,29.51 0 0 1 833.12,278.84 Z" fill="#0b7dda"/>
<path d="M805.60,289.50 L850.23,281.15 A45.40,45.40 0 0 1 851.00,289.50 Z" fill="#3aa9f2"/>
<path d="M805.60,289.50 L850.23,297.84 A45.40,45.40 0 0 1 847.93,305.90 Z" fill="#3aa9f2"/>
<path d="M805.60,289.50 L844.20,313.40 A45.40,45.40 0 0 1 839.15,320.09 Z" fill="#3aa9f2"/>
<path d="M805.60,289.50 L830.69,305.03 A29.51,29.51 0 0 1 827.41,309.38 Z" fill="#0b7dda"/>
<path d="M805.60,289.50 L832.96,325.73 A45.40,45.40 0 0 1 825.83,330.14 Z" fill="#3aa9f2"/>
<path d="M805.60,289.50 L826.12,316.67 A34.05,34.05 0 0 1 820.77,319.98 Z" fill="#0b7dda"/>
<path d="M805.60,289.50 L818.03,333.17 A45.40,45.40 0 0 1 809.78,334.71 Z" fill="#3aa9f2"/>
<path d="M805.60,289.50 L814.30,320.07 A31.78,31.78 0 0 1 808.53,321.14 Z" fill="#0b7dda"/>
<path d="M805.60,289.50 L801.42,334.71 A45.40,45.40 0 0 1 793.17,333.17 Z" fill="#3aa9f2"/>
<path d="M805.60,289.50 L802.63,321.60 A32.23,32.23 0 0 1 796.78,320.50 Z" fill="#0b7dda"/>
<path d="M805.60,289.50 L785.37,330.14 A45.40,45.40 0 0 1 778.24,325.73 Z" fill="#3aa9f2"/>
<path d="M805.60,289.50 L791.44,317.95 A31.78,31.78 0 0 1 786.45,314.86 Z" fill="#0b7dda"/>
<path d="M805.60,289.50 L772.05,320.09 A45.40,45.40 0 0 1 767.00,313.40 Z" fill="#3aa9f2"/>
<path d="M805.60,289.50 L784.46,308.77 A28.60,28.60 0 0 1 781.28,304.55 Z" fill="#0b7dda"/>
<path d="M805.60,289.50 L763.27,305.90 A45.40,45.40 0 0 1 760.97,297.84 Z" fill="#3aa9f2"/>
<path d="M805.60,289.50 L775.12,301.31 A32.69,32.69 0 0 1 773.47,295.50 Z" fill="#0b7dda"/>
<path d="M805.60,289.50 L760.20,289.50 A45.40,45.40 0 0 1 760.97,281.15 Z" fill="#3aa9f2"/>
<path d="M805.60,289.50 L772.91,289.50 A32.69,32.69 0 0 1 773.47,283.49 Z" fill="#0b7dda"/>
<path d="M805.60,289.50 L763.26,273.10 A45.40,45.40 0 0 1 767.00,265.60 Z" fill="#3aa9f2"/>
<path d="M805.60,289.50 L775.54,277.86 A32.23,32.23 0 0 1 778.20,272.53 Z" fill="#0b7dda"/>
<path d="M805.60,289.50 L772.05,258.92 A45.40,45.40 0 0 1 778.24,253.27 Z" fill="#3aa9f2"/>
<path d="M805.60,289.50 L785.36,248.86 A45.40,45.40 0 0 1 793.18,245.83 Z" fill="#3aa9f2"/>
<text x="797.8" y="235.5" font-size="8" fill="#f0f0f0" text-anchor="middle">1100</text>
<text x="819.4" y="232.5" font-size="8" fill="#f0f0f0" text-anchor="middle">XYZ100</text>
<text x="836.0" y="235.5" font-size="8" fill="#f0f0f0" text-anchor="middle">OUT100</text>
<text x="859.5" y="244.4" font-size="8" fill="#f0f0f0" text-anchor="middle">7400</text>
<text x="869.5" y="257.7" font-size="8" fill="#f0f0f0" text-anchor="middle">7300</text>
<text x="874.0" y="282.9" font-size="8" fill="#f0f0f0" text-anchor="middle">4030</text>
<text x="871.9" y="299.9" font-size="8" fill="#f0f0f0" text-anchor="middle">2235</text>
<text x="865.0" y="323.9" font-size="8" fill="#f0f0f0" text-anchor="middle">1970</text>
<text x="853.0" y="335.1" font-size="8" fill="#f0f0f0" text-anchor="middle">1600</text>
<text x="823.6" y="340.9" font-size="8" fill="#f0f0f0" text-anchor="middle">1590</text>
<text x="805.8" y="340.9" font-size="8" fill="#f0f0f0" text-anchor="middle">1520</text>
<text x="777.0" y="335.1" font-size="8" fill="#f0f0f0" text-anchor="middle">1500</text>
<text x="764.6" y="323.9" font-size="8" fill="#f0f0f0" text-anchor="middle">1400</text>
<text x="757.2" y="299.9" font-size="8" fill="#f0f0f0" text-anchor="middle">1240</text>
<text x="755.4" y="282.9" font-size="8" fill="#f0f0f0" text-anchor="middle">1210</text>
<text x="760.2" y="257.7" font-size="8" fill="#f0f0f0" text-anchor="middle">1200</text>
<text x="770.2" y="244.4" font-size="8" fill="#f0f0f0" text-anchor="middle">1105</text>
<rect x="4.2" y="357.1" width="392.7" height="26.5" fill="#0a7dd8"/>
<rect x="4.2" y="383.6" width="383.9" height="12.9" fill="#0a7dd8"/>
<line x1="119.50" y1="396.5" x2="119.50" y2="506" stroke="#5c5c5c" stroke-width="0.9"/>
<line x1="153.50" y1="396.5" x2="153.50" y2="506" stroke="#5c5c5c" stroke-width="0.9"/>
<line x1="180.40" y1="396.5" x2="180.40" y2="506" stroke="#5c5c5c" stroke-width="0.9"/>
<line x1="214.60" y1="396.5" x2="214.60" y2="506" stroke="#5c5c5c" stroke-width="0.9"/>
<line x1="255.60" y1="396.5" x2="255.60" y2="506" stroke="#5c5c5c" stroke-width="0.9"/>
<line x1="303.30" y1="396.5" x2="303.30" y2="506" stroke="#5c5c5c" stroke-width="0.9"/>
<line x1="345.50" y1="396.5" x2="345.50" y2="506" stroke="#5c5c5c" stroke-width="0.9"/>
<line x1="388.10" y1="396.5" x2="388.10" y2="506" stroke="#5c5c5c" stroke-width="0.9"/>
<line x1="3.70" y1="357.1" x2="3.70" y2="506" stroke="#a4a4a4" stroke-width="0.9"/>
<line x1="3.6" y1="370.40" x2="388.1" y2="370.40" stroke="#b0c8dc" stroke-width="0.8"/>
<line x1="4.2" y1="383.60" x2="396.9" y2="383.60" stroke="#c8c8c8" stroke-width="1.2"/>
<line x1="119.50" y1="357.1" x2="119.50" y2="383.6" stroke="#b0c8dc" stroke-width="0.8"/>
<text x="61.55" y="367.10" font-size="7.1" fill="#fff" text-anchor="middle">Groups</text>
<line x1="180.40" y1="357.1" x2="180.40" y2="383.6" stroke="#b0c8dc" stroke-width="0.8"/>
<text x="149.95" y="367.10" font-size="7.1" fill="#fff" text-anchor="middle">Order</text>
<line x1="153.50" y1="370.4" x2="153.50" y2="383.6" stroke="#b0c8dc" stroke-width="0.8"/>
<line x1="214.60" y1="357.1" x2="214.60" y2="383.6" stroke="#b0c8dc" stroke-width="0.8"/>
<text x="197.50" y="367.10" font-size="7.1" fill="#fff" text-anchor="middle">Posting</text>
<line x1="255.60" y1="357.1" x2="255.60" y2="383.6" stroke="#b0c8dc" stroke-width="0.8"/>
<text x="235.10" y="367.10" font-size="7.1" fill="#fff" text-anchor="middle">Shipment</text>
<line x1="303.30" y1="357.1" x2="303.30" y2="383.6" stroke="#b0c8dc" stroke-width="0.8"/>
<text x="279.45" y="367.10" font-size="7.1" fill="#fff" text-anchor="middle">Ship Via</text>
<text x="345.70" y="367.10" font-size="7.1" fill="#fff" text-anchor="middle">Shipment</text>
<line x1="345.50" y1="370.4" x2="345.50" y2="383.6" stroke="#b0c8dc" stroke-width="0.8"/>
<text x="136.50" y="380.00" font-size="7.3" fill="#fff" text-anchor="middle">Number</text>
<text x="166.95" y="380.00" font-size="7.3" fill="#fff" text-anchor="middle">Date</text>
<text x="197.50" y="380.00" font-size="7.3" fill="#fff" text-anchor="middle">Date</text>
<text x="235.10" y="380.00" font-size="7.3" fill="#fff" text-anchor="middle">Date</text>
<text x="279.45" y="380.00" font-size="7.3" fill="#fff" text-anchor="middle">Description</text>
<text x="324.40" y="380.00" font-size="7.3" fill="#fff" text-anchor="middle">Amount</text>
<text x="366.80" y="380.00" font-size="7.3" fill="#fff" text-anchor="middle">Total</text>
<line x1="119.50" y1="384.1" x2="119.50" y2="396.5" stroke="#111" stroke-width="0.9"/>
<line x1="153.50" y1="384.1" x2="153.50" y2="396.5" stroke="#111" stroke-width="0.9"/>
<line x1="180.40" y1="384.1" x2="180.40" y2="396.5" stroke="#111" stroke-width="0.9"/>
<line x1="214.60" y1="384.1" x2="214.60" y2="396.5" stroke="#111" stroke-width="0.9"/>
<line x1="255.60" y1="384.1" x2="255.60" y2="396.5" stroke="#111" stroke-width="0.9"/>
<line x1="303.30" y1="384.1" x2="303.30" y2="396.5" stroke="#111" stroke-width="0.9"/>
<line x1="345.50" y1="384.1" x2="345.50" y2="396.5" stroke="#111" stroke-width="0.9"/>
<text x="343.3" y="392.6" font-size="7.3" fill="#fff" text-anchor="end">70949.88</text>
<text x="385.4" y="392.6" font-size="7.3" fill="#fff" text-anchor="end">76800.79</text>
<rect x="486.2" y="357.1" width="303.6" height="26.5" fill="#0a7dd8"/>
<rect x="486.2" y="383.6" width="293.7" height="12.9" fill="#0a7dd8"/>
<line x1="618.50" y1="396.5" x2="618.50" y2="506" stroke="#5c5c5c" stroke-width="0.9"/>
<line x1="696.50" y1="396.5" x2="696.50" y2="506" stroke="#5c5c5c" stroke-width="0.9"/>
<line x1="738.50" y1="396.5" x2="738.50" y2="506" stroke="#5c5c5c" stroke-width="0.9"/>
<line x1="779.90" y1="396.5" x2="779.90" y2="506" stroke="#5c5c5c" stroke-width="0.9"/>
<line x1="485.70" y1="357.1" x2="485.70" y2="506" stroke="#a4a4a4" stroke-width="0.9"/>
<line x1="485.6" y1="370.40" x2="779.9" y2="370.40" stroke="#b0c8dc" stroke-width="0.8"/>
<line x1="486.2" y1="383.60" x2="789.7" y2="383.60" stroke="#c8c8c8" stroke-width="1.2"/>
<line x1="618.50" y1="357.1" x2="618.50" y2="383.6" stroke="#b0c8dc" stroke-width="0.8"/>
<text x="552.05" y="367.10" font-size="7.1" fill="#fff" text-anchor="middle">Groups</text>
<line x1="696.50" y1="357.1" x2="696.50" y2="383.6" stroke="#b0c8dc" stroke-width="0.8"/>
<text x="657.50" y="367.10" font-size="7.1" fill="#fff" text-anchor="middle">Facture</text>
<text x="738.20" y="367.10" font-size="7.1" fill="#fff" text-anchor="middle">Shipment</text>
<line x1="738.50" y1="370.4" x2="738.50" y2="383.6" stroke="#b0c8dc" stroke-width="0.8"/>
<text x="657.50" y="380.00" font-size="7.3" fill="#fff" text-anchor="middle">Number of Invoices</text>
<text x="717.50" y="380.00" font-size="7.3" fill="#fff" text-anchor="middle">Amount</text>
<text x="759.20" y="380.00" font-size="7.3" fill="#fff" text-anchor="middle">Total</text>
<line x1="618.50" y1="384.1" x2="618.50" y2="396.5" stroke="#111" stroke-width="0.9"/>
<line x1="696.50" y1="384.1" x2="696.50" y2="396.5" stroke="#111" stroke-width="0.9"/>
<line x1="738.50" y1="384.1" x2="738.50" y2="396.5" stroke="#111" stroke-width="0.9"/>
<text x="735.9" y="392.6" font-size="7.3" fill="#fff" text-anchor="end">70949.88</text>
<text x="777.2" y="392.6" font-size="7.3" fill="#fff" text-anchor="end">76800.79</text>
<path d="M11.00,402.00 L14.20,405.40 L11.00,408.80" fill="none" stroke="#000" stroke-width="1.05"/>
<text x="19.90" y="407.70" font-size="6.34" font-weight="bold" fill="#fff">ACME Plumbing</text>
<text x="343.40" y="407.70" font-size="6.35" fill="#fff" text-anchor="end">6337.070</text>
<text x="385.40" y="407.70" font-size="6.35" fill="#fff" text-anchor="end">6859.880</text>
<path d="M11.00,417.92 L14.20,421.32 L11.00,424.72" fill="none" stroke="#000" stroke-width="1.05"/>
<text x="19.90" y="423.62" font-size="6.34" font-weight="bold" fill="#fff">Bargain Mart - Oakland</text>
<text x="343.40" y="423.62" font-size="6.35" fill="#fff" text-anchor="end">6978.900</text>
<text x="385.40" y="423.62" font-size="6.35" fill="#fff" text-anchor="end">7554.650</text>
<path d="M11.00,433.84 L14.20,437.24 L11.00,440.64" fill="none" stroke="#000" stroke-width="1.05"/>
<text x="19.90" y="439.54" font-size="6.34" font-weight="bold" fill="#fff">Bargain Mart - San Diego</text>
<text x="343.40" y="439.54" font-size="6.35" fill="#fff" text-anchor="end">7197.220</text>
<text x="385.40" y="439.54" font-size="6.35" fill="#fff" text-anchor="end">7791.010</text>
<path d="M11.00,449.76 L14.20,453.16 L11.00,456.56" fill="none" stroke="#000" stroke-width="1.05"/>
<text x="19.90" y="455.46" font-size="6.34" font-weight="bold" fill="#fff">Break-Away Designs</text>
<text x="343.40" y="455.46" font-size="6.35" fill="#fff" text-anchor="end">4467.590</text>
<text x="385.40" y="455.46" font-size="6.35" fill="#fff" text-anchor="end">4836.180</text>
<path d="M11.00,465.68 L14.20,469.08 L11.00,472.48" fill="none" stroke="#000" stroke-width="1.05"/>
<text x="19.90" y="471.38" font-size="6.34" font-weight="bold" fill="#fff">Coastal Electric Company</text>
<text x="343.40" y="471.38" font-size="6.35" fill="#fff" text-anchor="end">2757.000</text>
<text x="385.40" y="471.38" font-size="6.35" fill="#fff" text-anchor="end">2984.480</text>
<path d="M11.00,481.60 L14.20,485.00 L11.00,488.40" fill="none" stroke="#000" stroke-width="1.05"/>
<text x="19.90" y="487.30" font-size="6.34" font-weight="bold" fill="#fff">Custom Comfort</text>
<text x="343.40" y="487.30" font-size="6.35" fill="#fff" text-anchor="end">3710.880</text>
<text x="385.40" y="487.30" font-size="6.35" fill="#fff" text-anchor="end">4017.020</text>
<path d="M11.00,497.52 L14.20,500.92 L11.00,504.32" fill="none" stroke="#000" stroke-width="1.05"/>
<text x="19.90" y="503.22" font-size="6.34" font-weight="bold" fill="#fff">Dr. Dan Penn</text>
<text x="343.40" y="503.22" font-size="6.35" fill="#fff" text-anchor="end">1388.910</text>
<text x="385.40" y="503.22" font-size="6.35" fill="#fff" text-anchor="end">1503.500</text>
<rect x="388.10" y="397.2" width="8.80" height="110" fill="#f0f0f0"/>
<rect x="388.70" y="415.2" width="7.60" height="31" fill="#c8c8c8"/>
<path d="M389.40,410.2 L392.50,406.9 L395.60,410.2" fill="none" stroke="#404040" stroke-width="1.2"/>
<path d="M389.40,496.2 L392.50,499.5 L395.60,496.2" fill="none" stroke="#404040" stroke-width="1.2"/>
<path d="M493.00,402.00 L496.20,405.40 L493.00,408.80" fill="none" stroke="#000" stroke-width="1.05"/>
<text x="501.90" y="407.70" font-size="6.34" font-weight="bold" fill="#fff">ACME Plumbing</text>
<text x="736.00" y="407.70" font-size="6.35" fill="#fff" text-anchor="end">6337.070</text>
<text x="777.40" y="407.70" font-size="6.35" fill="#fff" text-anchor="end">6859.880</text>
<path d="M493.00,417.92 L496.20,421.32 L493.00,424.72" fill="none" stroke="#000" stroke-width="1.05"/>
<text x="501.90" y="423.62" font-size="6.34" font-weight="bold" fill="#fff">Bargain Mart - Oakland</text>
<text x="736.00" y="423.62" font-size="6.35" fill="#fff" text-anchor="end">6978.900</text>
<text x="777.40" y="423.62" font-size="6.35" fill="#fff" text-anchor="end">7554.650</text>
<path d="M493.00,433.84 L496.20,437.24 L493.00,440.64" fill="none" stroke="#000" stroke-width="1.05"/>
<text x="501.90" y="439.54" font-size="6.34" font-weight="bold" fill="#fff">Bargain Mart - San Diego</text>
<text x="736.00" y="439.54" font-size="6.35" fill="#fff" text-anchor="end">7197.220</text>
<text x="777.40" y="439.54" font-size="6.35" fill="#fff" text-anchor="end">7791.010</text>
<path d="M493.00,449.76 L496.20,453.16 L493.00,456.56" fill="none" stroke="#000" stroke-width="1.05"/>
<text x="501.90" y="455.46" font-size="6.34" font-weight="bold" fill="#fff">Break-Away Designs</text>
<text x="736.00" y="455.46" font-size="6.35" fill="#fff" text-anchor="end">4467.590</text>
<text x="777.40" y="455.46" font-size="6.35" fill="#fff" text-anchor="end">4836.180</text>
<path d="M493.00,465.68 L496.20,469.08 L493.00,472.48" fill="none" stroke="#000" stroke-width="1.05"/>
<text x="501.90" y="471.38" font-size="6.34" font-weight="bold" fill="#fff">Coastal Electric Company</text>
<text x="736.00" y="471.38" font-size="6.35" fill="#fff" text-anchor="end">2757.000</text>
<text x="777.40" y="471.38" font-size="6.35" fill="#fff" text-anchor="end">2984.480</text>
<path d="M493.00,481.60 L496.20,485.00 L493.00,488.40" fill="none" stroke="#000" stroke-width="1.05"/>
<text x="501.90" y="487.30" font-size="6.34" font-weight="bold" fill="#fff">Custom Comfort</text>
<text x="736.00" y="487.30" font-size="6.35" fill="#fff" text-anchor="end">3710.880</text>
<text x="777.40" y="487.30" font-size="6.35" fill="#fff" text-anchor="end">4017.020</text>
<path d="M493.00,497.52 L496.20,500.92 L493.00,504.32" fill="none" stroke="#000" stroke-width="1.05"/>
<text x="501.90" y="503.22" font-size="6.34" font-weight="bold" fill="#fff">Dr. Dan Penn</text>
<text x="736.00" y="503.22" font-size="6.35" fill="#fff" text-anchor="end">1388.910</text>
<text x="777.40" y="503.22" font-size="6.35" fill="#fff" text-anchor="end">1503.500</text>
<rect x="779.90" y="397.2" width="9.80" height="110" fill="#f0f0f0"/>
<rect x="780.50" y="415.2" width="8.60" height="31" fill="#c8c8c8"/>
<path d="M781.70,410.2 L784.80,406.9 L787.90,410.2" fill="none" stroke="#404040" stroke-width="1.2"/>
<path d="M781.70,496.2 L784.80,499.5 L787.90,496.2" fill="none" stroke="#404040" stroke-width="1.2"/>
</svg>
</body></html>
